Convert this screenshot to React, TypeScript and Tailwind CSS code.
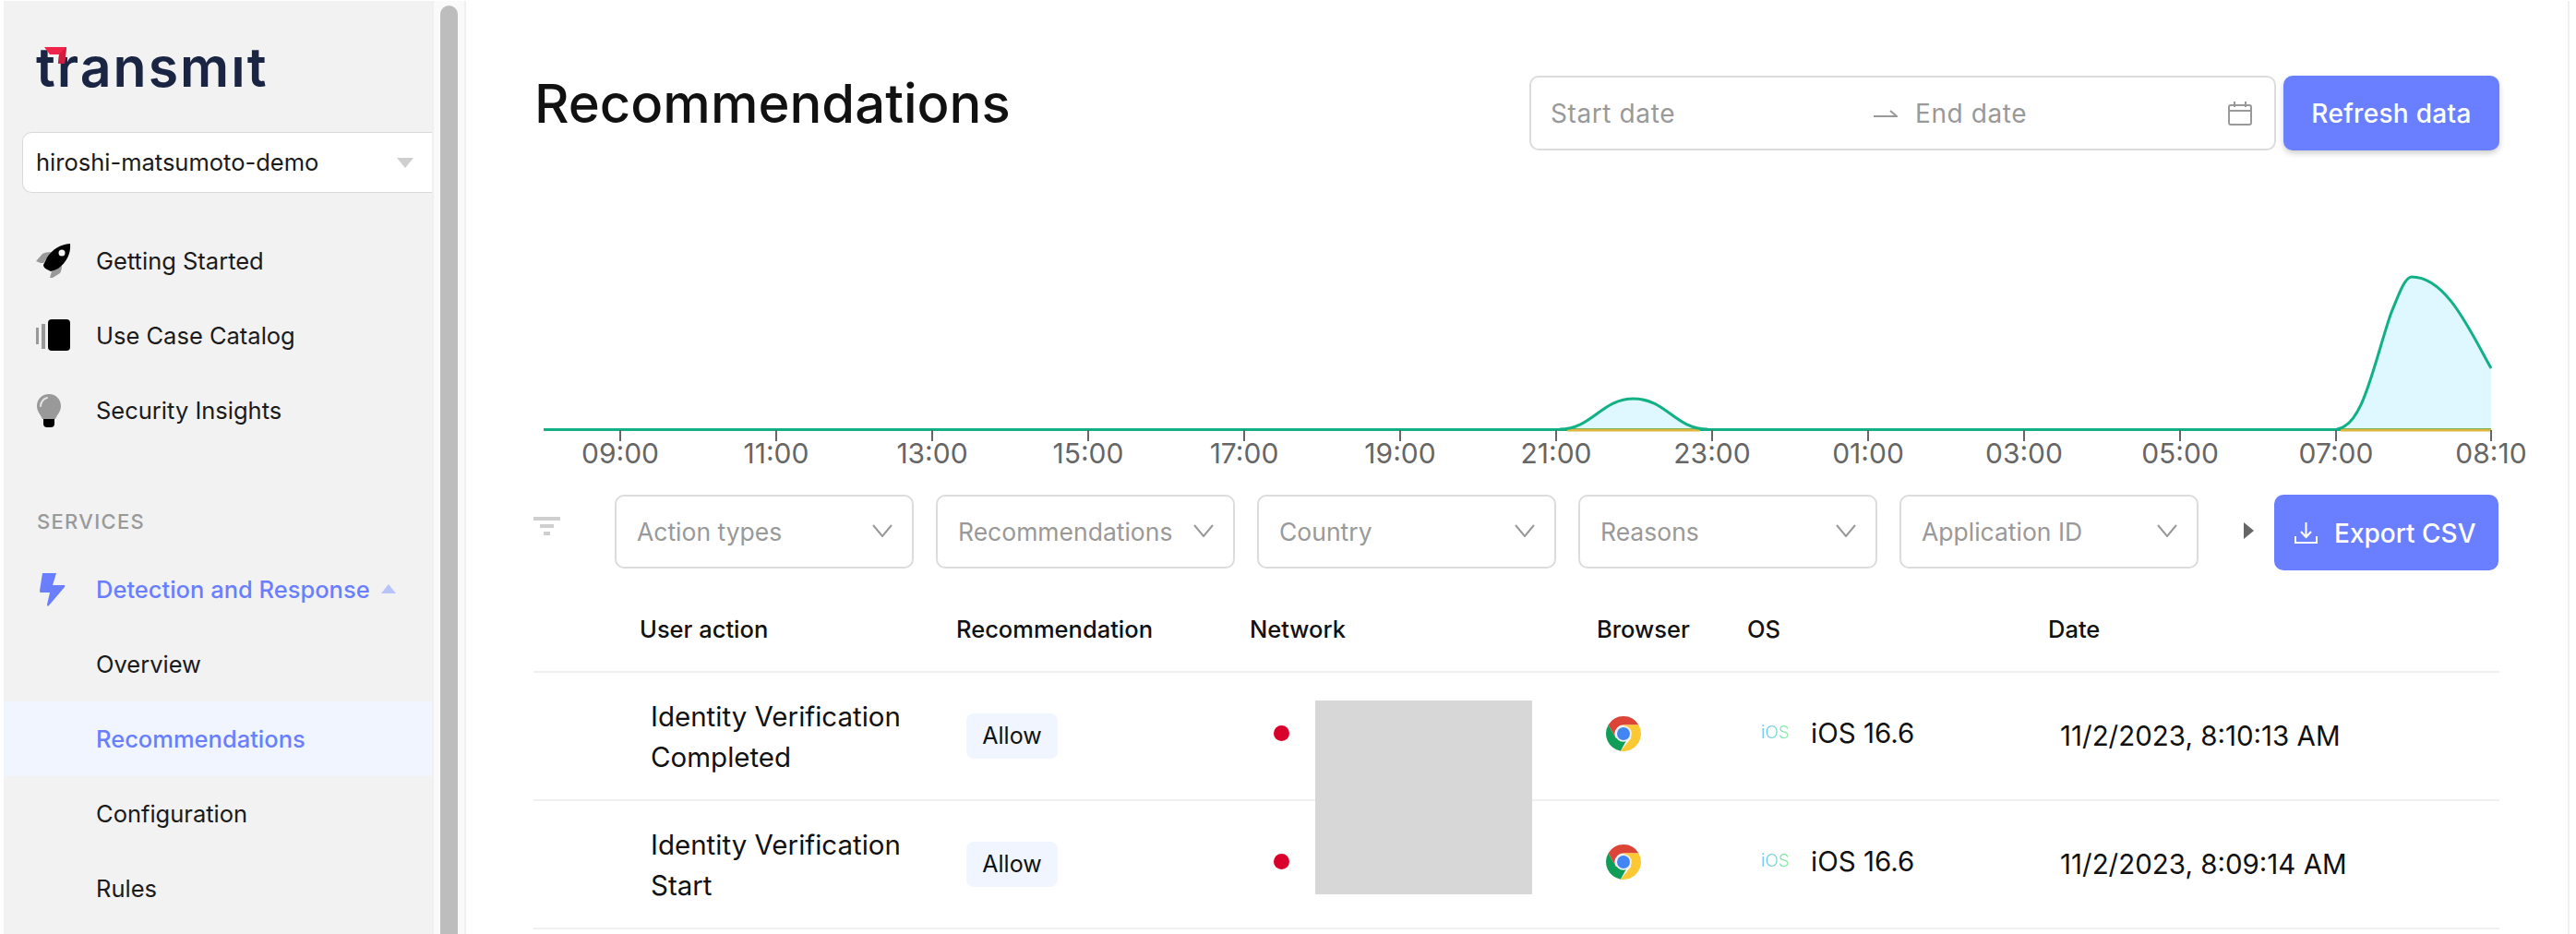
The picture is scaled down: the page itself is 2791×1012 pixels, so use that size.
const font = "font-['Inter','Noto_Sans',sans-serif]"

const filters = ["Action types", "Recommendations", "Country", "Reasons", "Application ID"]
const ticks = ["09:00", "11:00", "13:00", "15:00", "17:00", "19:00", "21:00", "23:00", "01:00", "03:00", "05:00", "07:00"]
const rows = [
  { action: ["Identity Verification", "Completed"], date: "11/2/2023, 8:10:13 AM" },
  { action: ["Identity Verification", "Start"], date: "11/2/2023, 8:09:14 AM" },
]
const tableCols = "grid grid-cols-[115px_343px_318px_376px_163px_326px_1fr]"

function Rocket() {
  return (
    <svg width="38" height="38" viewBox="0 0 38 38">
      <path d="M0 19 L7 11 Q10 9 17 9 L8 21 L5 21Z" fill="#999" />
      <path d="M15 37 L17 30 L28 23 Q28 29 26 32 L18 37Z" fill="#999" />
      <path d="M37 0 C26 1 18 6 12 15 L8 23 Q8 26 12 28 L16 30 Q20 29 24 27 C33 20 38 11 37 0Z" fill="#000" />
      <circle cx="28" cy="10" r="3.5" fill="#f2f2f2" />
    </svg>
  )
}

function Catalog() {
  return (
    <svg width="38" height="36" viewBox="0 0 38 36">
      <rect x="0" y="9" width="3" height="18" fill="#999" />
      <rect x="6" y="5" width="4" height="27" fill="#999" />
      <rect x="13" y="0" width="24" height="34" rx="4" fill="#000" />
    </svg>
  )
}

function Bulb() {
  return (
    <svg width="28" height="38" viewBox="0 0 28 38">
      <path d="M14 1 C6 1 1 7 1 14 C1 20 5 23 7 28 H21 C23 23 27 20 27 14 C27 7 22 1 14 1Z" fill="#999" />
      <path d="M5 14 C5 10 8 6 12 5" stroke="#e4e4e4" strokeWidth="2" fill="none" strokeLinecap="round" />
      <path d="M8 28 H20 V33 Q20 37 16 37 H12 Q8 37 8 33Z" fill="#000" />
    </svg>
  )
}

function Bolt() {
  return (
    <svg width="28" height="38" viewBox="0 0 28 38">
      <path d="M3 1 H18 L14 14 H27 Q28 15 27 16 L10 36 Q8 38 8 35 L11 22 H1 Q0 22 0 20Z" fill="#6a7fff" />
    </svg>
  )
}

function Chrome() {
  return (
    <svg width="38" height="38" viewBox="0 0 24 24">
      <path d="M12 0A12 12 0 0 1 22.4 6H12A6 6 0 0 0 6.8 15L1.6 6A12 12 0 0 1 12 0Z" fill="#db4437" />
      <path d="M1.6 6A12 12 0 0 0 10 23.8L14 16.5 6.8 15Z" fill="#0f9d58" />
      <path d="M22.4 6H12L17.2 15 10 23.8A12 12 0 0 0 22.4 6Z" fill="#fcc934" />
      <circle cx="12" cy="12" r="5.6" fill="#f1f1f1" />
      <circle cx="12" cy="12" r="4.4" fill="#4285f4" />
    </svg>
  )
}

function Chart() {
  const hump = "M1690 464 C1725 464 1735 431 1770 431 C1805 431 1815 464 1850 464"
  const peak = "M2532 464 C2560 460 2570 400 2590 340 C2600 315 2606 299 2613 299 C2650 299 2675 355 2699 398"
  return (
    <svg width="2133" height="373" viewBox="575 162 2133 373" className="block overflow-visible">
      <path d={hump + "Z"} fill="#dff7ff" />
      <path d={peak + " V464Z"} fill="#dff7ff" />
      <line x1="589" y1="464.5" x2="2699" y2="464.5" stroke="#12b185" strokeWidth="3" />
      <line x1="1698" y1="465" x2="1842" y2="465" stroke="#dfb53c" strokeWidth="3" />
      <line x1="2536" y1="465" x2="2699" y2="465" stroke="#dfb53c" strokeWidth="3" />
      <path d={hump} fill="none" stroke="#12b185" strokeWidth="3" />
      <path d={peak} fill="none" stroke="#12b185" strokeWidth="3" />
      {ticks.map((t, i) => (
        <g key={t}>
          <line x1={672 + 169 * i} y1="465" x2={672 + 169 * i} y2="477" stroke="#666" strokeWidth="2" />
          <text x={672 + 169 * i} y="501" textAnchor="middle" fontSize="30" fill="#666">{t}</text>
        </g>
      ))}
      <line x1="2699" y1="465" x2="2699" y2="477" stroke="#666" strokeWidth="2" />
      <text x="2699" y="501" textAnchor="middle" fontSize="30" fill="#666">08:10</text>
    </svg>
  )
}

function NavRow({ icon, label }: { icon: React.ReactNode; label: string }) {
  return (
    <div className="flex h-[81px] items-center pl-[35px] pt-px text-[25.5px] text-[#1a1a1a]">
      <div className="flex w-[65px] items-center">{icon}</div>
      {label}
    </div>
  )
}

export default function App() {
  return (
    <div className={`flex h-[1012px] w-[2791px] overflow-hidden bg-white pt-px ${font}`}>
      <aside className="ml-[4px] w-[464px] bg-[#f2f2f2]">
        <div className="h-[142px] pl-[35px] pt-[32px]">
          <div className="relative w-fit text-[59px] font-semibold leading-[80px] tracking-[2px] text-[#1a2544]">
            transmıt
            <svg width="24" height="18" viewBox="0 0 24 18" className="absolute left-[9px] top-[18px]">
              <path d="M0 0 H24 L22 18 H15 L16 8 H6Z" fill="#f0234b" />
              <path d="M16 8 L24 0 L22 18 H15Z" fill="#d11c3f" />
            </svg>
          </div>
        </div>
        <div className="ml-[20px] flex h-[66px] items-center justify-between rounded-l-[10px] border border-r-0 border-[#d9d9d9] bg-white pl-[14px] pr-[20px] text-[25.5px] text-[#1a1a1a]">
          hiroshi-matsumoto-demo
          <svg width="18" height="11" viewBox="0 0 18 11"><path d="M0 0 H18 L9 11Z" fill="#cfcfcf" /></svg>
        </div>
        <div className="mt-[33px]">
          <NavRow icon={<Rocket />} label="Getting Started" />
          <NavRow icon={<Catalog />} label="Use Case Catalog" />
          <NavRow icon={<Bulb />} label="Security Insights" />
        </div>
        <div className="h-[113px] pl-[36px] pt-[67px] text-[22px] font-medium leading-[26px] tracking-[0.06em] text-[#999]">SERVICES</div>
        <div className="flex h-[81px] items-center pl-[39px] pt-px text-[25.5px] font-medium text-[#6a7fff]">
          <div className="flex w-[61px] items-center"><Bolt /></div>
          Detection and Response
          <svg width="16" height="10" viewBox="0 0 16 10" className="ml-[12px] -mt-[2px]"><path d="M0 10 H16 L8 0Z" fill="#b9c3fb" /></svg>
        </div>
        <div className="flex h-[81px] items-center pl-[100px] pt-px text-[25.5px] text-[#1a1a1a]">Overview</div>
        <div className="flex h-[81px] items-center bg-[#f0f5ff] pl-[100px] pt-px text-[25.5px] font-medium text-[#6a7fff]">Recommendations</div>
        <div className="flex h-[81px] items-center pl-[100px] pt-px text-[25.5px] text-[#1a1a1a]">Configuration</div>
        <div className="flex h-[81px] items-center pl-[100px] pt-px text-[25.5px] text-[#1a1a1a]">Rules</div>
      </aside>

      <div className="w-[37px] border-x-2 border-[#f0f0f0] bg-[#fafafa] px-[7px] pt-[5px]">
        <div className="h-[1100px] rounded-t-[10px] bg-[#bdbdbd]" />
      </div>

      <main className="flex-1 pl-[70px] pr-[74px] pt-[81px]">
        <div className="flex h-[81px] items-start justify-between">
          <h1 className="pl-[4px] text-[58px] font-medium leading-[60px] text-[#111]">Recommendations</h1>
          <div className="flex gap-[8px]">
            <div className="flex h-[81px] w-[809px] items-center rounded-[10px] border-2 border-[#dcdcdc] pl-[21px] pr-[24px] pt-[1px] text-[28px] tracking-[0.6px] text-[#999]">
              <span className="w-[350px]">Start date</span>
              <svg width="26" height="8" viewBox="0 0 26 8"><path d="M0 7 H25 L18 1" stroke="#999" strokeWidth="2" fill="none" /></svg>
              <span className="ml-[19px] flex-1">End date</span>
              <svg width="26" height="26" viewBox="0 0 26 26" fill="none" stroke="#999" strokeWidth="2">
                <rect x="1" y="4" width="24" height="21" rx="2" />
                <path d="M1 10 H25 M7 0 V6 M19 0 V6" />
              </svg>
            </div>
            <button className="h-[81px] w-[234px] rounded-[10px] bg-[#6a7fff] pt-[1px] text-[28px] font-medium tracking-[0.3px] text-white shadow-[0_3px_6px_rgba(0,0,0,0.2)]">Refresh data</button>
          </div>
        </div>

        <Chart />

        <div className="flex h-[82px] items-start">
          <svg width="29" height="20" viewBox="0 0 29 20" className="ml-[3px] mr-[59px] mt-[24px] shrink-0" fill="#cfcfcf">
            <rect x="0" y="0" width="29" height="4" />
            <rect x="7" y="8" width="15" height="4" />
            <rect x="11" y="16" width="7" height="4" />
          </svg>
          <div className="flex gap-[24px]">
            {filters.map((f) => (
              <div key={f} className="flex h-[80px] w-[324px] items-center justify-between rounded-[10px] border-2 border-[#dcdcdc] pl-[22px] pr-[21px] pt-[2px] text-[26.5px] text-[#999]">
                {f}
                <svg width="22" height="14" viewBox="0 0 22 14" fill="none" stroke="#999" strokeWidth="2" className="-mt-[4px] shrink-0">
                  <path d="M1 1 L11 13 L21 1" />
                </svg>
              </div>
            ))}
          </div>
          <svg width="12" height="18" viewBox="0 0 12 18" className="ml-[48px] mt-[30px] shrink-0"><path d="M1 0 L12 9 L1 18Z" fill="#666" /></svg>
          <button className="ml-[22px] flex h-[82px] w-[243px] items-center gap-[18px] rounded-[10px] bg-[#6a7fff] pl-[22px] pt-[1px] text-[28px] font-medium text-white">
            <svg width="25" height="24" viewBox="0 0 25 24" fill="none" stroke="#fff" strokeWidth="2" className="shrink-0">
              <path d="M12.5 0 V15 M7 10 L12.5 16 L18 10 M1 15 V22 H24 V15" />
            </svg>
            Export CSV
          </button>
        </div>

        <div className="ml-[3px]">
          <div className={`${tableCols} h-[111px] items-center border-b-2 border-[#f0f0f0] pt-[20px] text-[25.5px] font-medium text-[#111]`}>
            <div />
            <div>User action</div>
            <div>Recommendation</div>
            <div>Network</div>
            <div>Browser</div>
            <div>OS</div>
            <div>Date</div>
          </div>
          <div className="relative">
            {rows.map((r) => (
              <div key={r.date} className={`${tableCols} h-[139px] items-center border-b-2 border-[#f0f0f0] text-[29.5px] text-[#111]`}>
                <div />
                <div className="pl-[12px] leading-[44px]">
                  {r.action[0]}
                  <br />
                  {r.action[1]}
                </div>
                <div className="pl-[11px]">
                  <span className="flex h-[49px] w-[99px] items-center justify-center rounded-[8px] bg-[#f0f5ff] text-[25px]">Allow</span>
                </div>
                <div className="pb-[6px] pl-[26px]"><div className="h-[17px] w-[17px] rounded-full bg-[#d9002b]" /></div>
                <div className="pb-[6px] pl-[10px]"><Chrome /></div>
                <div className="flex items-center pb-[6px] pl-[15px]">
                  <span className="w-[54px] bg-gradient-to-r from-[#5fbcff] via-[#86e8a0] to-[#d8f05a] bg-clip-text text-[19px] font-light text-transparent">iOS</span>
                  <span>iOS 16.6</span>
                </div>
                <div className="pl-[13px]">{r.date}</div>
              </div>
            ))}
            <div className="absolute left-[847px] top-[30px] h-[210px] w-[235px] bg-[#d7d7d7]" />
          </div>
        </div>
      </main>

      <div className="w-[9px] border-l-2 border-[#f0f0f0] bg-white" />
    </div>
  )
}
